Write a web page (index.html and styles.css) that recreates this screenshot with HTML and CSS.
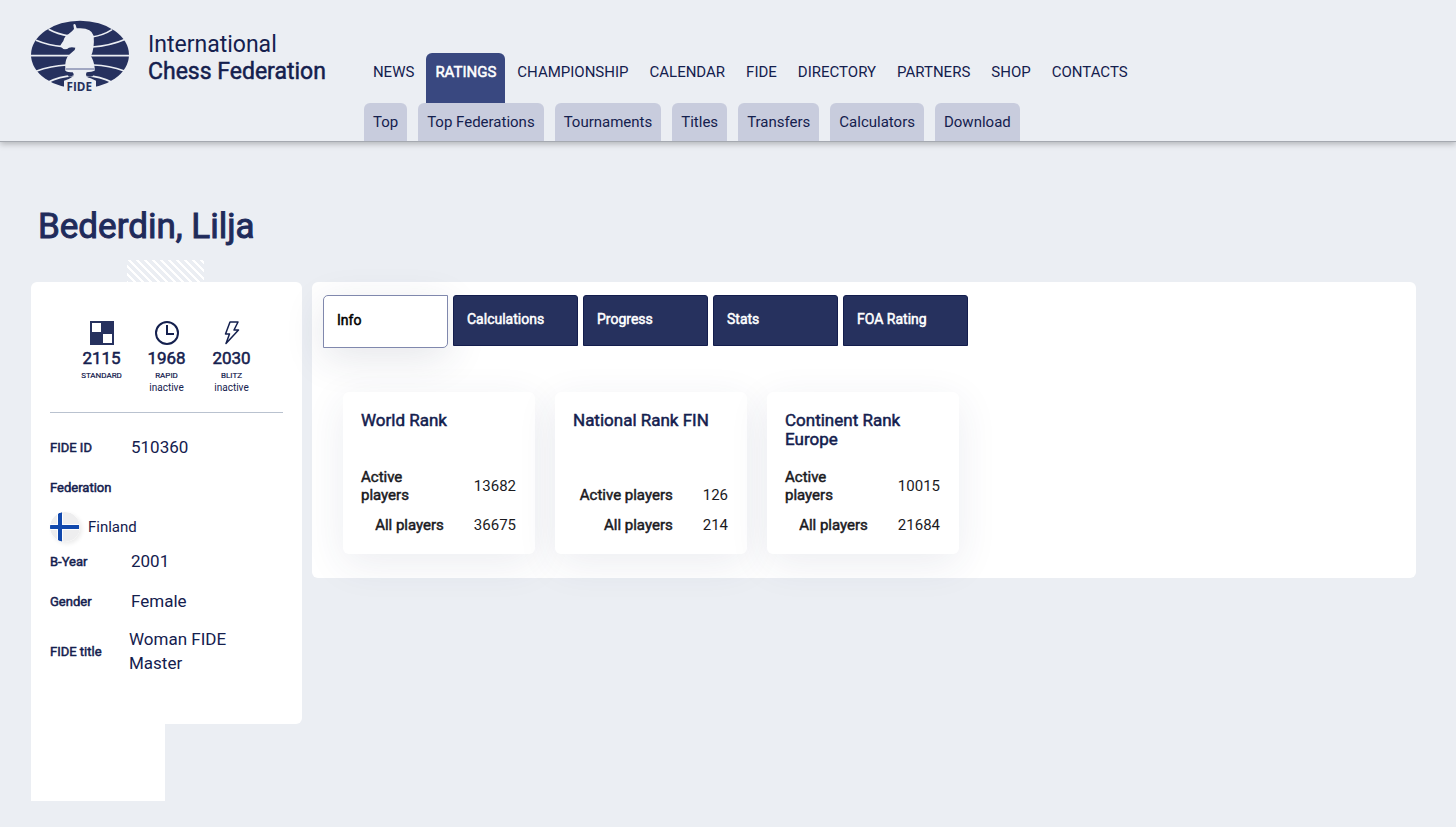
FILE: index.html
```
<!DOCTYPE html>
<html lang="en">
<head>
    <meta charset="UTF-8">
    <meta name="viewport" content="width=device-width, initial-scale=1.0">
    <title>Bederdin, Lilja</title>
    <link rel="stylesheet" href="styles.css">
</head>
<body>
    <header class="header">
        <a class="brand" href="#">
            <svg class="brand-logo" viewBox="33 15 294 219" aria-hidden="true">
                <ellipse cx="180" cy="119" rx="147" ry="102" fill="#26315e"/>
                <g fill="none" stroke="#ebeef3" stroke-width="5">
                    <path d="M86 43Q112 58 148 63M216 66Q250 61 276 44"/>
                    <path d="M48 76Q86 92 128 95M216 96Q270 93 316 73"/>
                    <path d="M33 122H327"/>
                    <path d="M48 169Q92 152 140 150M220 150Q268 151 313 168"/>
                    <path d="M84 202Q118 184 160 182M200 182Q240 184 276 202"/>
                </g>
                <path fill="#ebeef3" d="M160 29Q164 24 167 30L170 40Q214 36 221 62Q224 98 213 124Q221 136 224 158L224 167Q216 171 200 172Q192 186 212 190L228 197V234H132V197Q150 192 160 184Q164 178 158 172Q142 172 136 167Q134 140 142 126Q150 116 164 105L166 98Q155 96 147 98Q140 104 130 102L121 94Q120 91 130 78Q134 62 146 57Q158 48 162 42Z"/>
                <path d="M138 162H223" stroke="#9299b8" stroke-width="5"/>
                <path fill="#26315e" d="M140 172Q156 173 160 179Q158 186 146 185ZM222 172Q200 172 198 180Q204 187 218 184Z"/>
                <text class="logo-text" x="178" y="227" text-anchor="middle">FIDE</text>
            </svg>
            <span class="brand-name">International<br><span class="bold">Chess Federation</span></span>
        </a>
        <nav class="nav">
            <ul class="menu">
                <li><a href="#">NEWS</a></li>
                <li><a class="active bold" href="#">RATINGS</a></li>
                <li><a href="#">CHAMPIONSHIP</a></li>
                <li><a href="#">CALENDAR</a></li>
                <li><a href="#">FIDE</a></li>
                <li><a href="#">DIRECTORY</a></li>
                <li><a href="#">PARTNERS</a></li>
                <li><a href="#">SHOP</a></li>
                <li><a href="#">CONTACTS</a></li>
            </ul>
            <ul class="submenu">
                <li><a href="#">Top</a></li>
                <li><a href="#">Top Federations</a></li>
                <li><a href="#">Tournaments</a></li>
                <li><a href="#">Titles</a></li>
                <li><a href="#">Transfers</a></li>
                <li><a href="#">Calculators</a></li>
                <li><a href="#">Download</a></li>
            </ul>
        </nav>
    </header>

    <main class="container">
        <h1 class="player-name bold">Bederdin, Lilja</h1>
        <div class="profile">
            <aside class="side">
                <div class="stripes"></div>
                <div class="side-card">
                    <div class="ratings">
                        <div class="rating">
                            <svg viewBox="0 0 24 24" aria-hidden="true">
                                <path fill="#26315e" d="M0 0H24V24H0Z"/>
                                <path fill="#fff" d="M2 2H11V11H2ZM13 13H22V22H13Z"/>
                            </svg>
                            <p class="rating-value bold">2115</p>
                            <p class="rating-label bold">STANDARD</p>
                        </div>
                        <div class="rating">
                            <svg viewBox="0 0 24 24" fill="none" stroke="#14204e" stroke-width="2" aria-hidden="true">
                                <circle cx="12" cy="12" r="11"/>
                                <path d="M12 4V13H19"/>
                            </svg>
                            <p class="rating-value bold">1968</p>
                            <p class="rating-label bold">RAPID</p>
                            <p class="rating-note">inactive</p>
                        </div>
                        <div class="rating">
                            <svg viewBox="0 0 24 24" fill="none" stroke="#14204e" stroke-width="1.5" stroke-linejoin="round" aria-hidden="true">
                                <path d="M10 1H18L14 9H18.5L6 22.500L9.500 13H5.500Z"/>
                            </svg>
                            <p class="rating-value bold">2030</p>
                            <p class="rating-label bold">BLITZ</p>
                            <p class="rating-note">inactive</p>
                        </div>
                    </div>
                    <dl class="info">
                        <div class="info-row">
                            <dt class="bold">FIDE ID</dt>
                            <dd>510360</dd>
                        </div>
                        <div class="info-row federation">
                            <dt class="bold">Federation</dt>
                            <dd>
                                <svg class="flag" viewBox="0 0 30 30" aria-hidden="true">
                                    <circle cx="15" cy="15" r="15" fill="#eeeeef"/>
                                    <path fill="#fff" d="M0 12H29V18H0ZM7 2H13V28H7Z"/>
                                    <path fill="#1249ad" d="M0 13H29V17H0ZM8 1.500L12 0V30L8 28.500Z"/>
                                </svg>
                                Finland
                            </dd>
                        </div>
                        <div class="info-row">
                            <dt class="bold">B-Year</dt>
                            <dd>2001</dd>
                        </div>
                        <div class="info-row">
                            <dt class="bold">Gender</dt>
                            <dd>Female</dd>
                        </div>
                        <div class="info-row title">
                            <dt class="bold">FIDE title</dt>
                            <dd>Woman FIDE Master</dd>
                        </div>
                    </dl>
                </div>
                <div class="photo"></div>
            </aside>

            <section class="panel">
                <div class="tabs">
                    <button class="tab selected bold" type="button">Info</button>
                    <button class="tab bold" type="button">Calculations</button>
                    <button class="tab bold" type="button">Progress</button>
                    <button class="tab bold" type="button">Stats</button>
                    <button class="tab bold" type="button">FOA Rating</button>
                </div>
                <div class="ranks">
                    <div class="rank-card">
                        <h2 class="bold">World Rank</h2>
                        <table>
                            <tr><th class="bold"><span>Active players</span></th><td>13682</td></tr>
                            <tr><th class="bold"><span>All players</span></th><td>36675</td></tr>
                        </table>
                    </div>
                    <div class="rank-card">
                        <h2 class="bold">National Rank FIN</h2>
                        <table>
                            <tr><th class="bold"><span>Active players</span></th><td>126</td></tr>
                            <tr><th class="bold"><span>All players</span></th><td>214</td></tr>
                        </table>
                    </div>
                    <div class="rank-card">
                        <h2 class="bold">Continent Rank Europe</h2>
                        <table>
                            <tr><th class="bold"><span>Active players</span></th><td>10015</td></tr>
                            <tr><th class="bold"><span>All players</span></th><td>21684</td></tr>
                        </table>
                    </div>
                </div>
            </section>
        </div>
    </main>
</body>
</html>
```
FILE: styles.css
```
* {
    margin: 0;
    padding: 0;
    box-sizing: border-box;
}
body {
    background: #ebeef3;
    color: #14204e;
    font-family: Roboto, Arial, sans-serif;
    font-size: 15px;
}
a {
    color: inherit;
    text-decoration: none;
}
ul {
    list-style: none;
}
.bold {
    font-weight: 400;
    -webkit-text-stroke: 0.5px currentColor;
}

/* header */
.header {
    display: flex;
    align-items: flex-start;
    gap: 38px;
    padding-left: 31px;
    border-bottom: 1px solid #a5a9b0;
    box-shadow: 0 2px 6px rgba(0,0,0,0.25);
}
.brand {
    display: flex;
    gap: 19px;
    padding-top: 20px;
}
.brand-logo {
    width: 98px;
    height: 73px;
}
.logo-text {
    fill: #26315e;
    font: 700 35px "Open Sans", sans-serif;
}
.brand-name {
    padding-top: 11px;
    font-size: 23px;
    line-height: 27px;
    white-space: nowrap;
}
.nav {
    padding-top: 53px;
}
.menu, .submenu {
    display: flex;
    line-height: 38px;
}
.menu {
    gap: 3px;
}
.submenu {
    gap: 11px;
}
.menu a, .submenu a {
    display: block;
    padding: 0 9px;
}
.menu a {
    height: 50px;
}
.menu .active {
    background: #394880;
    color: #fff;
    border-radius: 6px 6px 0 0;
}
.submenu a {
    background: #c8ccdd;
    border-radius: 6px 6px 0 0;
}

/* player */
.container {
    padding: 63px 40px 27px 31px;
}
.player-name {
    padding-left: 7px;
    font-size: 35px;
    line-height: 44px;
    color: #1f2b5b;
    -webkit-text-stroke-width: 1px;
}
.profile {
    display: flex;
    align-items: flex-start;
    gap: 10px;
    padding-top: 11px;
}
.side {
    flex: 0 0 271px;
}
.stripes {
    width: 77px;
    height: 22px;
    margin-left: 96px;
    background: linear-gradient(45deg, #fff 0 20%, transparent 20% 50%, #fff 50% 70%, transparent 70%) 0 0 / 8px 8px;
}
.side-card {
    padding: 39px 19px 49px;
    background: #fff;
    border-radius: 6px 6px 6px 0;
}
.ratings {
    display: flex;
    justify-content: center;
    padding-bottom: 17px;
    border-bottom: 1px solid #b9c2cf;
}
.rating {
    width: 65px;
    text-align: center;
}
.rating svg {
    display: block;
    width: 24px;
    height: 24px;
    margin: 0 auto;
}
.rating-value {
    font-size: 17px;
    line-height: 26px;
}
.rating-label {
    font-size: 8px;
    line-height: 10px;
    -webkit-text-stroke-width: 0.2px;
}
.rating-note {
    font-size: 10px;
    line-height: 14px;
}
.info {
    padding-top: 14px;
}
.info-row {
    display: flex;
    align-items: center;
    min-height: 40px;
}
.info dt {
    flex: 0 0 81px;
    font-size: 13px;
}
.info dd {
    font-size: 17px;
    line-height: 24px;
}
.info .federation {
    display: block;
    padding-top: 12px;
}
.federation dt {
    line-height: 17px;
}
.info .federation dd {
    display: flex;
    align-items: center;
    gap: 8px;
    margin-top: 17px;
    height: 28px;
    font-size: 15px;
}
.flag {
    width: 30px;
    height: 30px;
    border-radius: 50%;
    box-shadow: 2px 2px 4px rgba(0,0,0,0.08);
}
.info .title {
    padding-top: 6px;
}
.info .title dt {
    flex-basis: 79px;
}
.photo {
    width: 134px;
    height: 77px;
    background: #fff;
}

/* right panel */
.panel {
    flex: 1;
    margin-top: 22px;
    padding: 13px 11px 24px;
    background: #fff;
    border-radius: 6px;
}
.tabs {
    display: flex;
    align-items: flex-start;
    gap: 5px;
    height: 53px;
}
.tab {
    width: 125px;
    height: 51px;
    padding: 0 13px 3px;
    border: 1px solid #131d4d;
    border-radius: 3px 3px 0 0;
    background: #26315e;
    color: #fff;
    font: 14px Roboto, Arial, sans-serif;
    text-align: left;
}
.tab.selected {
    height: 53px;
    border-color: #8088ad;
    border-radius: 5px 0 5px 0;
    background: #fff;
    color: #000;
    box-shadow: 0 10px 40px rgba(40,50,80,0.12);
}
.ranks {
    display: flex;
    gap: 20px;
    padding: 44px 20px 0;
}
.rank-card {
    display: flex;
    flex-direction: column;
    justify-content: space-between;
    gap: 13px;
    width: 192px;
    padding: 19px 19px 14px 18px;
    background: #fff;
    border-radius: 6px;
    box-shadow: 0 10px 40px rgba(40,60,100,0.09);
}
.rank-card h2 {
    font-size: 17px;
    line-height: 19px;
}
.rank-card table {
    width: 100%;
    border-collapse: collapse;
    color: #1b1b1f;
    line-height: 18px;
}
.rank-card th {
    padding: 6px 0;
    text-align: right;
}
.rank-card th span {
    display: inline-block;
    text-align: left;
    vertical-align: top;
}
.rank-card td {
    width: 1%;
    padding-left: 30px;
    text-align: right;
    white-space: nowrap;
}
```
